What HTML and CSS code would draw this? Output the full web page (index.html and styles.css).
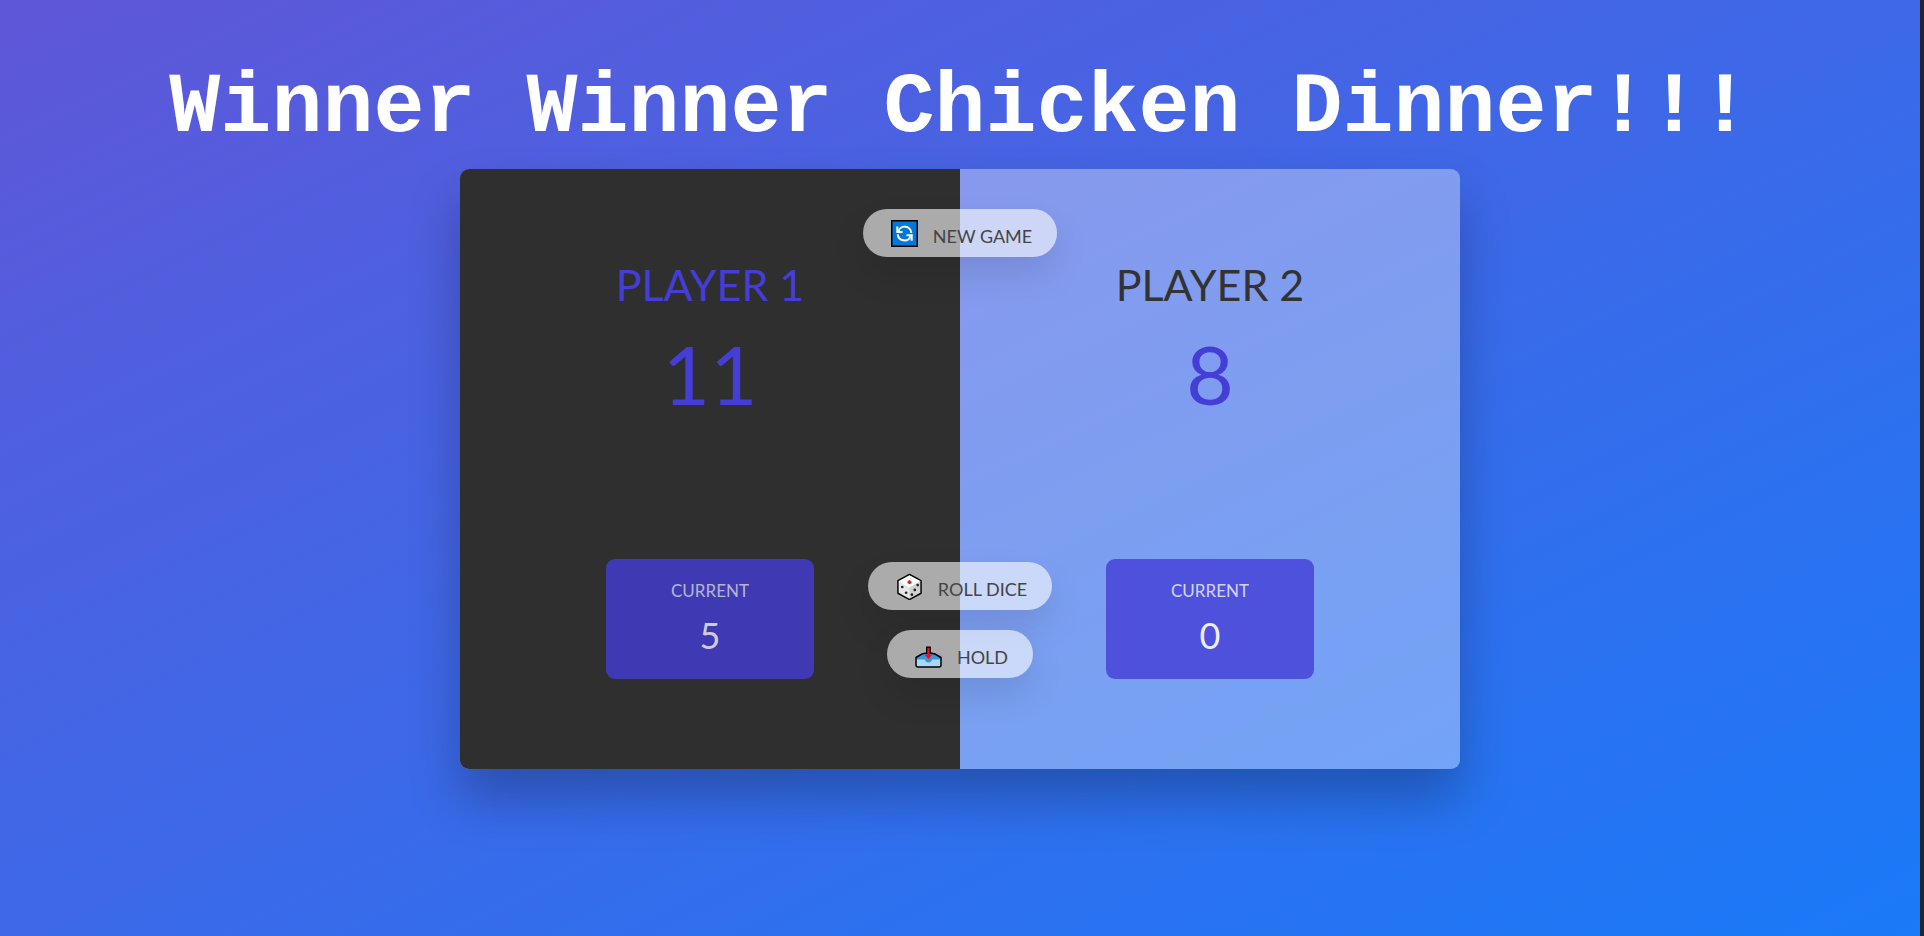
FILE: index.html
```html
<!DOCTYPE html>
<html lang="en">
<head>
<meta charset="utf-8">
<meta name="viewport" content="width=device-width, initial-scale=1">
<title>Pig Game</title>
<link rel="stylesheet" href="styles.css">
</head>
<body>
<div class="page">
  <h1 class="title">Winner Winner Chicken Dinner!!!</h1>
  <main class="board">
    <section class="player player-winner">
      <h2 class="name">Player 1</h2>
      <p class="score">11</p>
      <div class="current">
        <p class="current-label">Current</p>
        <p class="current-score">5</p>
      </div>
    </section>
    <section class="player">
      <h2 class="name">Player 2</h2>
      <p class="score">8</p>
      <div class="current">
        <p class="current-label">Current</p>
        <p class="current-score">0</p>
      </div>
    </section>
    <div class="controls">
      <button class="btn btn-new" type="button">
        <svg class="icon" viewBox="0 0 27 27" aria-hidden="true">
          <rect x="0.750" y="0.750" width="25.500" height="25.500" fill="#0078d7" stroke="#000" stroke-width="1.500"/>
          <g fill="none" stroke="#fff" stroke-width="2">
            <path d="M7.500 11A6.600 6.600 0 0 1 20.300 13"/>
            <path d="M6.300 6.500V12h5.200"/>
            <path d="M6.800 14.200A6.600 6.600 0 0 0 19.500 16.300"/>
            <path d="M20.700 20.700V15.200h-5.200"/>
          </g>
        </svg>
        <span>New game</span>
      </button>
      <button class="btn" type="button">
        <svg class="icon" viewBox="0 0 28 28" aria-hidden="true">
          <path d="M14 1.500 26 8v13l-12 6.500L2 21V8z" fill="#e6e6e6"/>
          <path d="M14 1.500 26 8l-12 7L2 8z" fill="#fff"/>
          <path d="M14 15 26 8v13l-12 6.500z" fill="#d0d0d0"/>
          <path d="M14 1.500 26 8v13l-12 6.500L2 21V8z" fill="none" stroke="#000" stroke-width="1.500" stroke-linejoin="round"/>
          <path d="M14 7.500v4M12 9.500h4" stroke="#e81123" stroke-width="2"/>
          <g fill="#222"><circle cx="6.500" cy="14.500" r="1.400"/><circle cx="10.500" cy="20.500" r="1.400"/><circle cx="22.500" cy="12.500" r="1.400"/><circle cx="19.500" cy="17.500" r="1.400"/><circle cx="16.500" cy="22.500" r="1.400"/></g>
        </svg>
        <span>Roll dice</span>
      </button>
      <button class="btn" type="button">
        <svg class="icon" viewBox="0 0 27 27" aria-hidden="true">
          <path d="M1 16.500 7 13l6.500-1.500L20 13l6 3.500V24q0 2-2 2H3q-2 0-2-2z" fill="#3a96dd"/>
          <path d="M1 18.500h9q.5 3 3.500 3t3.500-3h9V24q0 2-2 2H3q-2 0-2-2z" fill="#a9d8f3"/>
          <path d="M1 16.500 7 13l6.500-1.500L20 13l6 3.500V24q0 2-2 2H3q-2 0-2-2z" fill="none" stroke="#000" stroke-width="1.500" stroke-linejoin="round"/>
          <path d="M11 5.500h5V13h-5z" fill="#000"/>
          <path d="M13.500 7v9" stroke="#e81123" stroke-width="2.500"/>
          <path d="M10.500 14h6L13.500 17.500z" fill="#e81123" stroke="#e81123"/>
        </svg>
        <span>Hold</span>
      </button>
    </div>
  </main>
</div>
</body>
</html>
```
FILE: styles.css
```css
* {
  box-sizing: border-box;
  margin: 0;
  padding: 0;
}

body {
  min-height: 100vh;
  background: #252229;
  color: #333;
  font-family: Lato, "Open Sans", sans-serif;
}

.page {
  display: flex;
  flex-direction: column;
  align-items: center;
  min-height: 100vh;
  margin-right: 4px;
  padding: 60px 20px;
  background: linear-gradient(to top left, #1a7af8, #5f57d8);
}

.title {
  margin-bottom: 12px;
  color: #fff;
  font: bold 85px/97px "Liberation Mono", monospace;
  white-space: nowrap;
}

.board {
  position: relative;
  display: flex;
  width: 100%;
  max-width: 1000px;
  min-height: 600px;
  border-radius: 9px;
  overflow: hidden;
  background: rgba(255, 255, 255, 0.35);
  box-shadow: 0 30px 50px rgba(0, 0, 0, 0.25);
}

.player {
  display: flex;
  flex: 1;
  flex-direction: column;
  align-items: center;
  padding: 90px;
}

.player-winner {
  background: #2f2f2f;
}

.name {
  font-size: 43px;
  font-weight: 400;
  line-height: 52px;
  text-transform: uppercase;
}

.player-winner .name {
  color: #443dd6;
}

.score {
  color: #443dd6;
  font-size: 82px;
  font-weight: 400;
  line-height: 124px;
}

.current {
  width: 65%;
  margin-top: auto;
  padding: 20px;
  border-radius: 9px;
  background: rgba(68, 61, 214, 0.8);
  color: #fff;
  text-align: center;
}

.player-winner .current {
  color: #ddd;
}

.current-label {
  font-size: 17px;
  line-height: 24px;
  text-transform: uppercase;
  opacity: 0.75;
}

.current-score {
  margin-top: 8px;
  font-size: 36px;
  line-height: 48px;
  opacity: 0.9;
}

.controls {
  position: absolute;
  inset: 40px 0 91px;
  display: flex;
  flex-direction: column;
  align-items: center;
  gap: 20px;
  pointer-events: none;
}

.btn {
  display: flex;
  align-items: center;
  gap: 15px;
  height: 48px;
  padding: 0 25px 0 28px;
  border: 0;
  border-radius: 48px;
  background: rgba(255, 255, 255, 0.6);
  box-shadow: 0 18px 35px rgba(0, 0, 0, 0.1);
  color: #444;
  font: 400 18px/24px Lato, "Open Sans", sans-serif;
  text-transform: uppercase;
  pointer-events: auto;
  cursor: pointer;
}

.btn-new {
  margin-bottom: auto;
}

.btn span {
  padding-top: 5px;
}

.icon {
  width: 27px;
  height: 27px;
}
```
